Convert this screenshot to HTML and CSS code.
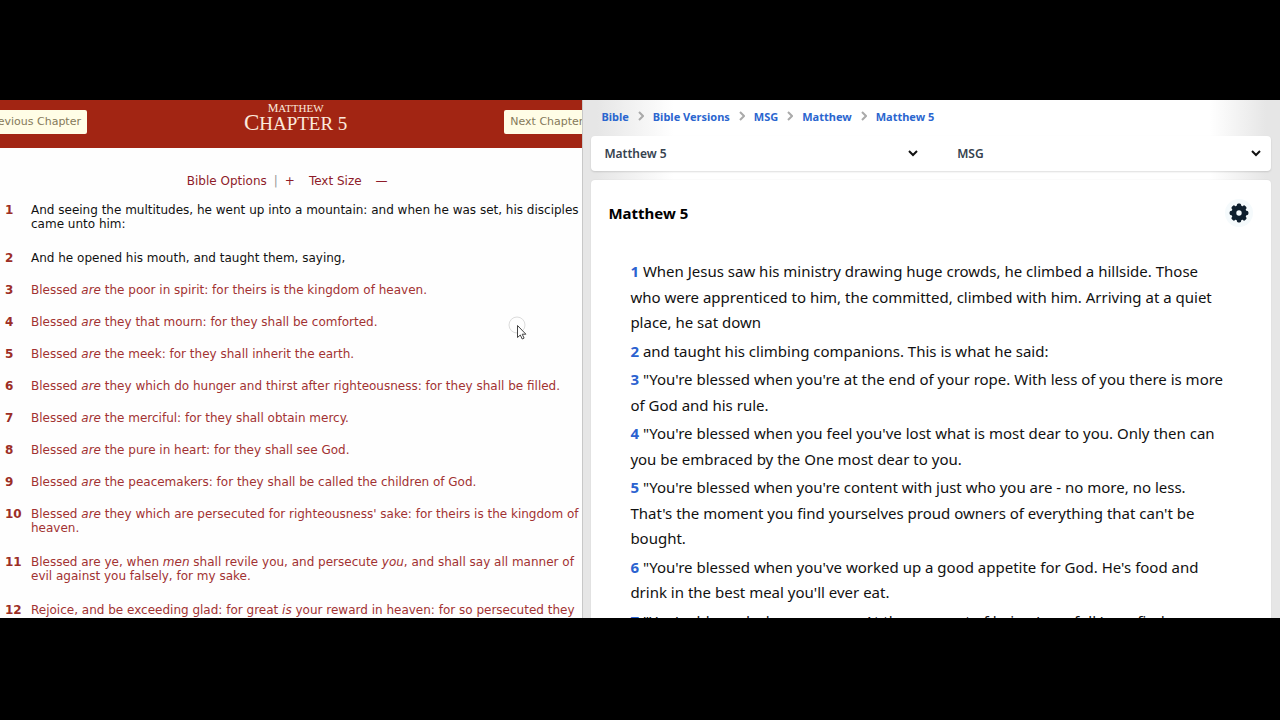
FILE: index.html
```html
<!DOCTYPE html>
<html lang="en">
<head>
<meta charset="utf-8">
<title>Matthew 5</title>
<link rel="stylesheet" href="styles.css">
</head>
<body>
<main class="stage">
  <section class="kjv">
    <header class="kjv-header">
      <button class="chapter-button previous" type="button">Previous Chapter</button>
      <h1 class="chapter-title"><span class="book">Matthew</span><span class="chapter">Chapter 5</span></h1>
      <button class="chapter-button next" type="button">Next Chapter</button>
    </header>
    <nav class="options">
      <a href="#options">Bible Options</a>
      <span class="divider">|</span>
      <button class="size-button" type="button" aria-label="Larger text">+</button>
      <span class="size-label">Text Size</span>
      <button class="size-button" type="button" aria-label="Smaller text">—</button>
    </nav>
    <div class="kjv-verses">
      <div class="row long plain"><b>1</b><p>And seeing the multitudes, he went up into a mountain: and when he was set, his disciples<br>came unto him:</p></div>
      <div class="row plain"><b>2</b><p>And he opened his mouth, and taught them, saying,</p></div>
      <div class="row"><b>3</b><p>Blessed <i>are</i> the poor in spirit: for theirs is the kingdom of heaven.</p></div>
      <div class="row"><b>4</b><p>Blessed <i>are</i> they that mourn: for they shall be comforted.</p></div>
      <div class="row"><b>5</b><p>Blessed <i>are</i> the meek: for they shall inherit the earth.</p></div>
      <div class="row"><b>6</b><p>Blessed <i>are</i> they which do hunger and thirst after righteousness: for they shall be filled.</p></div>
      <div class="row"><b>7</b><p>Blessed <i>are</i> the merciful: for they shall obtain mercy.</p></div>
      <div class="row"><b>8</b><p>Blessed <i>are</i> the pure in heart: for they shall see God.</p></div>
      <div class="row"><b>9</b><p>Blessed <i>are</i> the peacemakers: for they shall be called the children of God.</p></div>
      <div class="row long"><b>10</b><p>Blessed <i>are</i> they which are persecuted for righteousness' sake: for theirs is the kingdom of<br>heaven.</p></div>
      <div class="row long"><b>11</b><p>Blessed are ye, when <i>men</i> shall revile you, and persecute <i>you</i>, and shall say all manner of<br>evil against you falsely, for my sake.</p></div>
      <div class="row"><b>12</b><p>Rejoice, and be exceeding glad: for great <i>is</i> your reward in heaven: for so persecuted they</p></div>
    </div>
  </section>

  <section class="msg">
    <nav class="crumbs" aria-label="Breadcrumb">
      <a href="#bible">Bible</a>
      <svg class="sep" viewBox="0 0 6 10"><path d="M1 1l4 4-4 4"/></svg>
      <a href="#versions">Bible Versions</a>
      <svg class="sep" viewBox="0 0 6 10"><path d="M1 1l4 4-4 4"/></svg>
      <a href="#msg">MSG</a>
      <svg class="sep" viewBox="0 0 6 10"><path d="M1 1l4 4-4 4"/></svg>
      <a href="#matthew">Matthew</a>
      <svg class="sep" viewBox="0 0 6 10"><path d="M1 1l4 4-4 4"/></svg>
      <a href="#matthew-5">Matthew 5</a>
    </nav>
    <div class="pickers">
      <div class="picker">
        <select aria-label="Chapter"><option>Matthew 5</option></select>
        <svg class="chevron" viewBox="0 0 10 7"><path d="M1 1l4 4 4-4"/></svg>
      </div>
      <div class="picker">
        <select aria-label="Version"><option>MSG</option></select>
        <svg class="chevron" viewBox="0 0 10 7"><path d="M1 1l4 4 4-4"/></svg>
      </div>
    </div>
    <article class="card">
      <header class="card-header">
        <h2>Matthew 5</h2>
        <button class="gear" type="button" aria-label="Settings">
          <svg viewBox="0 0 20 20">
            <g fill="#0f1f2e">
              <circle cx="10" cy="10" r="7.6"/>
              <rect x="7.800" y="0.600" width="4.400" height="18.800" rx="1.600"/>
              <rect x="7.800" y="0.600" width="4.400" height="18.800" rx="1.600" transform="rotate(45 10 10)"/>
              <rect x="7.800" y="0.600" width="4.400" height="18.800" rx="1.600" transform="rotate(90 10 10)"/>
              <rect x="7.800" y="0.600" width="4.400" height="18.800" rx="1.600" transform="rotate(135 10 10)"/>
            </g>
            <circle cx="10" cy="10" r="2.700" fill="#f5fafc"/>
          </svg>
        </button>
      </header>
      <div class="msg-verses">
        <p><b>1</b> When Jesus saw his ministry drawing huge crowds, he climbed a hillside. Those<br>who were apprenticed to him, the committed, climbed with him. Arriving at a quiet<br>place, he sat down</p>
        <p><b>2</b> and taught his climbing companions. This is what he said:</p>
        <p><b>3</b> "You're blessed when you're at the end of your rope. With less of you there is more<br>of God and his rule.</p>
        <p><b>4</b> "You're blessed when you feel you've lost what is most dear to you. Only then can<br>you be embraced by the One most dear to you.</p>
        <p><b>5</b> "You're blessed when you're content with just who you are - no more, no less.<br>That's the moment you find yourselves proud owners of everything that can't be<br>bought.</p>
        <p><b>6</b> "You're blessed when you've worked up a good appetite for God. He's food and<br>drink in the best meal you'll ever eat.</p>
        <p><b>7</b> "You're blessed when you care. At the moment of being 'care-full,' you find</p>
      </div>
    </article>
  </section>
  <svg class="pointer" viewBox="0 0 20 24" aria-hidden="true">
    <circle cx="9" cy="9" r="8" fill="none" stroke="#dcdcdc"/>
    <path d="M9.500 9.500v12l2.800-2.500 1.900 4 1.900-.9-1.900-3.900h3.700z" fill="#fff" stroke="#444"/>
  </svg>
</main>
</body>
</html>
```

FILE: styles.css
```css
* { box-sizing: border-box; }

body {
  margin: 0;
  height: 100vh;
  display: grid;
  grid-template-rows: 100px minmax(0, 1fr) 102px;
  background: #000;
  overflow: hidden;
}

h1, h2, p { margin: 0; font-weight: inherit; }
a { text-decoration: none; }
button { font: inherit; border: 0; cursor: pointer; }

.stage {
  grid-row: 2;
  position: relative;
  display: grid;
  grid-template-columns: 45.5% minmax(0, 1fr);
  overflow: hidden;
}

.kjv {
  overflow: hidden;
  background: #fefefe;
  font: 12px/14px Verdana, "DejaVu Sans", sans-serif;
  color: #a23232;
}

.kjv-header {
  height: 48px;
  display: flex;
  justify-content: space-between;
  align-items: flex-start;
  background: #a22513;
}

.chapter-button {
  flex: none;
  height: 24px;
  margin-top: 10px;
  padding: 0 6px;
  border-radius: 2px;
  background: #fffde6;
  color: #85795a;
  font-size: 11px;
  white-space: nowrap;
}
.previous { margin-left: -19px; }
.next { margin-right: -7px; }

.chapter-title {
  display: flex;
  flex-direction: column;
  align-items: center;
  padding-top: 2px;
  font-family: "Liberation Serif", serif;
  text-transform: uppercase;
  color: #fbe9dc;
}
.book { font-size: 11px; line-height: 12px; }
.book::first-letter { font-size: 12px; }
.chapter { font-size: 19px; line-height: 18px; }
.chapter::first-letter { font-size: 23px; }

.options {
  display: flex;
  justify-content: center;
  margin-top: 26px;
  padding-right: 8px;
  color: #8e1c2a;
}
.options a { color: inherit; }
.divider { margin: 0 7px; color: #999; }
.size-button { padding: 0; background: none; color: inherit; }
.size-label { margin: 0 14px; }

.kjv-verses { margin-top: 15px; padding-left: 5px; }
.row {
  display: grid;
  grid-template-columns: 26px 1fr;
  margin-bottom: 18px;
  white-space: nowrap;
}
.long { margin-bottom: 20px; }
.row b { color: #9c2e26; }
.plain p { color: #111; }

.msg {
  display: flex;
  flex-direction: column;
  padding: 7px 9px 0 8px;
  overflow: hidden;
  border-left: 1px solid #c8c8c8;
  background: linear-gradient(to right, #e6e6e6 2%, #fff 13%, #fff 90%, #e6e6e6 98%);
  font-family: "Segoe UI", "Noto Sans", sans-serif;
}

.crumbs {
  flex: none;
  display: flex;
  align-items: center;
  height: 18px;
  padding-left: 10px;
  gap: 9px;
  font-size: 11px;
  font-weight: 700;
}
.crumbs a { color: #2b66cf; }
.sep { width: 6px; height: 10px; }
.sep path { fill: none; stroke: #aaa; stroke-width: 2; }

.pickers {
  flex: none;
  display: grid;
  grid-template-columns: 34fr 33fr;
  gap: 16px;
  height: 35px;
  margin-top: 11px;
  border-radius: 4px;
  background: #fff;
  box-shadow: 0 1px 2px #0002;
}
.picker { display: grid; align-items: center; }
.picker > * { grid-area: 1 / 1; }
.picker select {
  appearance: none;
  width: 100%;
  height: 35px;
  padding: 0 13px;
  border: 0;
  background: transparent;
  color: #36424e;
  font: 600 12px "Segoe UI", "Noto Sans", sans-serif;
}
.chevron {
  justify-self: end;
  width: 10px;
  height: 7px;
  margin-right: 10px;
  pointer-events: none;
}
.chevron path { fill: none; stroke: #111; stroke-width: 2; }

.card {
  flex: 1 0 auto;
  margin-top: 9px;
  border-radius: 4px 4px 0 0;
  background: #fff;
  box-shadow: 0 0 2px #0001;
}
.card-header {
  display: flex;
  justify-content: space-between;
  align-items: center;
  height: 66px;
  padding: 0 18px 0 17px;
}
.card-header h2 { font-size: 15px; font-weight: 700; }
.gear {
  display: grid;
  place-items: center;
  width: 28px;
  height: 28px;
  padding: 0;
  border-radius: 50%;
  background: #f5fafc;
}
.gear svg { width: 20px; height: 20px; }

.msg-verses {
  display: grid;
  gap: 3px;
  margin-top: 13px;
  padding-left: 39px;
  font-size: 15px;
  line-height: 1.7;
  color: #111;
  white-space: nowrap;
}
.msg-verses b { color: #2b62d0; }

/* The mouse pointer floats over both panes. */
.pointer {
  position: absolute;
  left: 508px;
  top: 216px;
  width: 20px;
  height: 24px;
}
```
